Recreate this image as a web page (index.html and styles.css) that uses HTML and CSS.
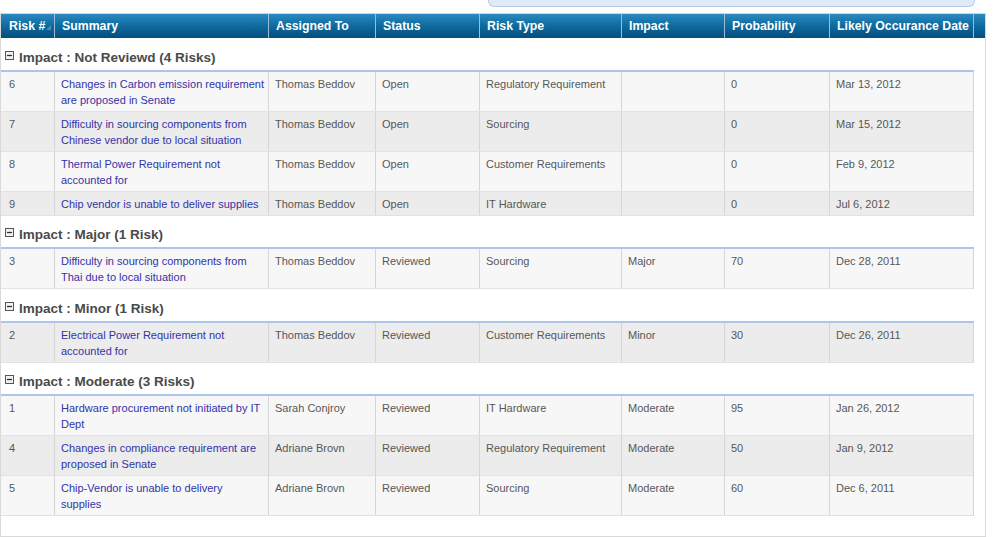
FILE: index.html
```html
<!DOCTYPE html>
<html>
<head>
<meta charset="utf-8">
<title>Risks by Impact</title>
<link rel="stylesheet" href="styles.css">
</head>
<body>
<div class="topbar"></div>
<div class="panel">
  <div class="thead">
    <div class="th">Risk #<svg class="sort" width="5" height="5" viewBox="0 0 5 5"><path d="M5 0 L5 5 L0 5 Z"/></svg></div>
    <div class="th">Summary</div>
    <div class="th">Assigned To</div>
    <div class="th">Status</div>
    <div class="th">Risk Type</div>
    <div class="th">Impact</div>
    <div class="th">Probability</div>
    <div class="th">Likely Occurance Date</div>
    <div class="th"></div>
  </div>

  <div class="group">
    <div class="group-title"><svg class="toggle" width="9" height="9" viewBox="0 0 9 9"><rect x="0.5" y="0.5" width="8" height="8" fill="#f2f2f2" stroke="#555"/><path d="M2 4.5 H7" stroke="#2e2e2e" stroke-width="1.3"/></svg>Impact : Not Reviewd (4 Risks)</div>
    <div class="rows">
      <div class="row odd">
        <div class="td">6</div><div class="td"><a class="link">Changes in Carbon emission requirement are proposed in Senate</a></div><div class="td">Thomas Beddov</div><div class="td">Open</div><div class="td">Regulatory Requirement</div><div class="td"></div><div class="td">0</div><div class="td">Mar 13, 2012</div>
      </div>
      <div class="row even">
        <div class="td">7</div><div class="td"><a class="link">Difficulty in sourcing components from Chinese vendor due to local situation</a></div><div class="td">Thomas Beddov</div><div class="td">Open</div><div class="td">Sourcing</div><div class="td"></div><div class="td">0</div><div class="td">Mar 15, 2012</div>
      </div>
      <div class="row odd">
        <div class="td">8</div><div class="td"><a class="link">Thermal Power Requirement not accounted for</a></div><div class="td">Thomas Beddov</div><div class="td">Open</div><div class="td">Customer Requirements</div><div class="td"></div><div class="td">0</div><div class="td">Feb 9, 2012</div>
      </div>
      <div class="row even">
        <div class="td">9</div><div class="td"><a class="link">Chip vendor is unable to deliver supplies</a></div><div class="td">Thomas Beddov</div><div class="td">Open</div><div class="td">IT Hardware</div><div class="td"></div><div class="td">0</div><div class="td">Jul 6, 2012</div>
      </div>
    </div>
  </div>

  <div class="group">
    <div class="group-title"><svg class="toggle" width="9" height="9" viewBox="0 0 9 9"><rect x="0.5" y="0.5" width="8" height="8" fill="#f2f2f2" stroke="#555"/><path d="M2 4.5 H7" stroke="#2e2e2e" stroke-width="1.3"/></svg>Impact : Major (1 Risk)</div>
    <div class="rows">
      <div class="row odd">
        <div class="td">3</div><div class="td"><a class="link">Difficulty in sourcing components from Thai due to local situation</a></div><div class="td">Thomas Beddov</div><div class="td">Reviewed</div><div class="td">Sourcing</div><div class="td">Major</div><div class="td">70</div><div class="td">Dec 28, 2011</div>
      </div>
    </div>
  </div>

  <div class="group">
    <div class="group-title"><svg class="toggle" width="9" height="9" viewBox="0 0 9 9"><rect x="0.5" y="0.5" width="8" height="8" fill="#f2f2f2" stroke="#555"/><path d="M2 4.5 H7" stroke="#2e2e2e" stroke-width="1.3"/></svg>Impact : Minor (1 Risk)</div>
    <div class="rows">
      <div class="row even">
        <div class="td">2</div><div class="td"><a class="link">Electrical Power Requirement not accounted for</a></div><div class="td">Thomas Beddov</div><div class="td">Reviewed</div><div class="td">Customer Requirements</div><div class="td">Minor</div><div class="td">30</div><div class="td">Dec 26, 2011</div>
      </div>
    </div>
  </div>

  <div class="group">
    <div class="group-title"><svg class="toggle" width="9" height="9" viewBox="0 0 9 9"><rect x="0.5" y="0.5" width="8" height="8" fill="#f2f2f2" stroke="#555"/><path d="M2 4.5 H7" stroke="#2e2e2e" stroke-width="1.3"/></svg>Impact : Moderate (3 Risks)</div>
    <div class="rows">
      <div class="row odd">
        <div class="td">1</div><div class="td"><a class="link">Hardware procurement not initiated by IT Dept</a></div><div class="td">Sarah Conjroy</div><div class="td">Reviewed</div><div class="td">IT Hardware</div><div class="td">Moderate</div><div class="td">95</div><div class="td">Jan 26, 2012</div>
      </div>
      <div class="row even">
        <div class="td">4</div><div class="td"><a class="link">Changes in compliance requirement are proposed in Senate</a></div><div class="td">Adriane Brovn</div><div class="td">Reviewed</div><div class="td">Regulatory Requirement</div><div class="td">Moderate</div><div class="td">50</div><div class="td">Jan 9, 2012</div>
      </div>
      <div class="row odd">
        <div class="td">5</div><div class="td"><a class="link">Chip-Vendor is unable to delivery supplies</a></div><div class="td">Adriane Brovn</div><div class="td">Reviewed</div><div class="td">Sourcing</div><div class="td">Moderate</div><div class="td">60</div><div class="td">Dec 6, 2011</div>
      </div>
    </div>
  </div>
</div>
</body>
</html>
```

FILE: styles.css
```css
html, body {
  margin: 0;
  padding: 0;
  background: #ffffff;
  font-family: "Liberation Sans", Arial, sans-serif;
}

.topbar {
  margin-left: 488px;
  width: 485px;
  height: 6px;
  background: #dfeaf9;
  border: 1px solid #b8cbe7;
  border-top: 0;
  border-radius: 0 0 6px 6px;
}

.panel {
  margin-top: 6px;
  width: 984px;
  border: 1px solid #d9d9d9;
  border-top: 0;
  padding-bottom: 20px;
}

.thead {
  display: grid;
  grid-template-columns: 53px 214px 107px 104px 142px 103px 105px 144px 11px;
  height: 24px;
  border-top: 1px solid #ccd6df;
  background: linear-gradient(to bottom, #2c8ac1 0%, #0e6a9e 50%, #034f7d 100%);
}

.th {
  position: relative;
  color: #ffffff;
  font-weight: bold;
  font-size: 12.3px;
  line-height: 24px;
  padding-left: 7px;
  border-left: 1px solid #9dbcd3;
  white-space: nowrap;
  overflow: hidden;
}

.th:first-child {
  border-left: 0;
  padding-left: 8px;
}

.sort {
  position: absolute;
  left: 45px;
  top: 11px;
  fill: rgba(255, 255, 255, 0.25);
}

.group-title {
  display: flex;
  align-items: flex-start;
  gap: 5px;
  padding: 10.5px 0 3px 4px;
  font-size: 13.5px;
  font-weight: bold;
  line-height: 18px;
  color: #4a4a4a;
}

.toggle {
  flex: none;
  margin-top: 2px;
}

.rows {
  width: 972px;
  border-top: 2px solid #abc6ea;
  border-right: 1px solid #c9d9ec;
}

.row {
  display: grid;
  grid-template-columns: 53px 214px 107px 104px 142px 103px 105px 144px;
  border-bottom: 1px solid #dce3e9;
}

.row.odd {
  background: #f7f7f7;
}

.row.even {
  background: #ececec;
}

.td {
  padding: 4px 3px 3px 6px;
  font-size: 11px;
  line-height: 16px;
  color: #575757;
  border-left: 1px solid #d6d6d6;
}

.td:first-child {
  border-left: 0;
  padding-left: 8px;
}

.link {
  color: #3333a8;
  text-decoration: none;
  cursor: pointer;
}
```
